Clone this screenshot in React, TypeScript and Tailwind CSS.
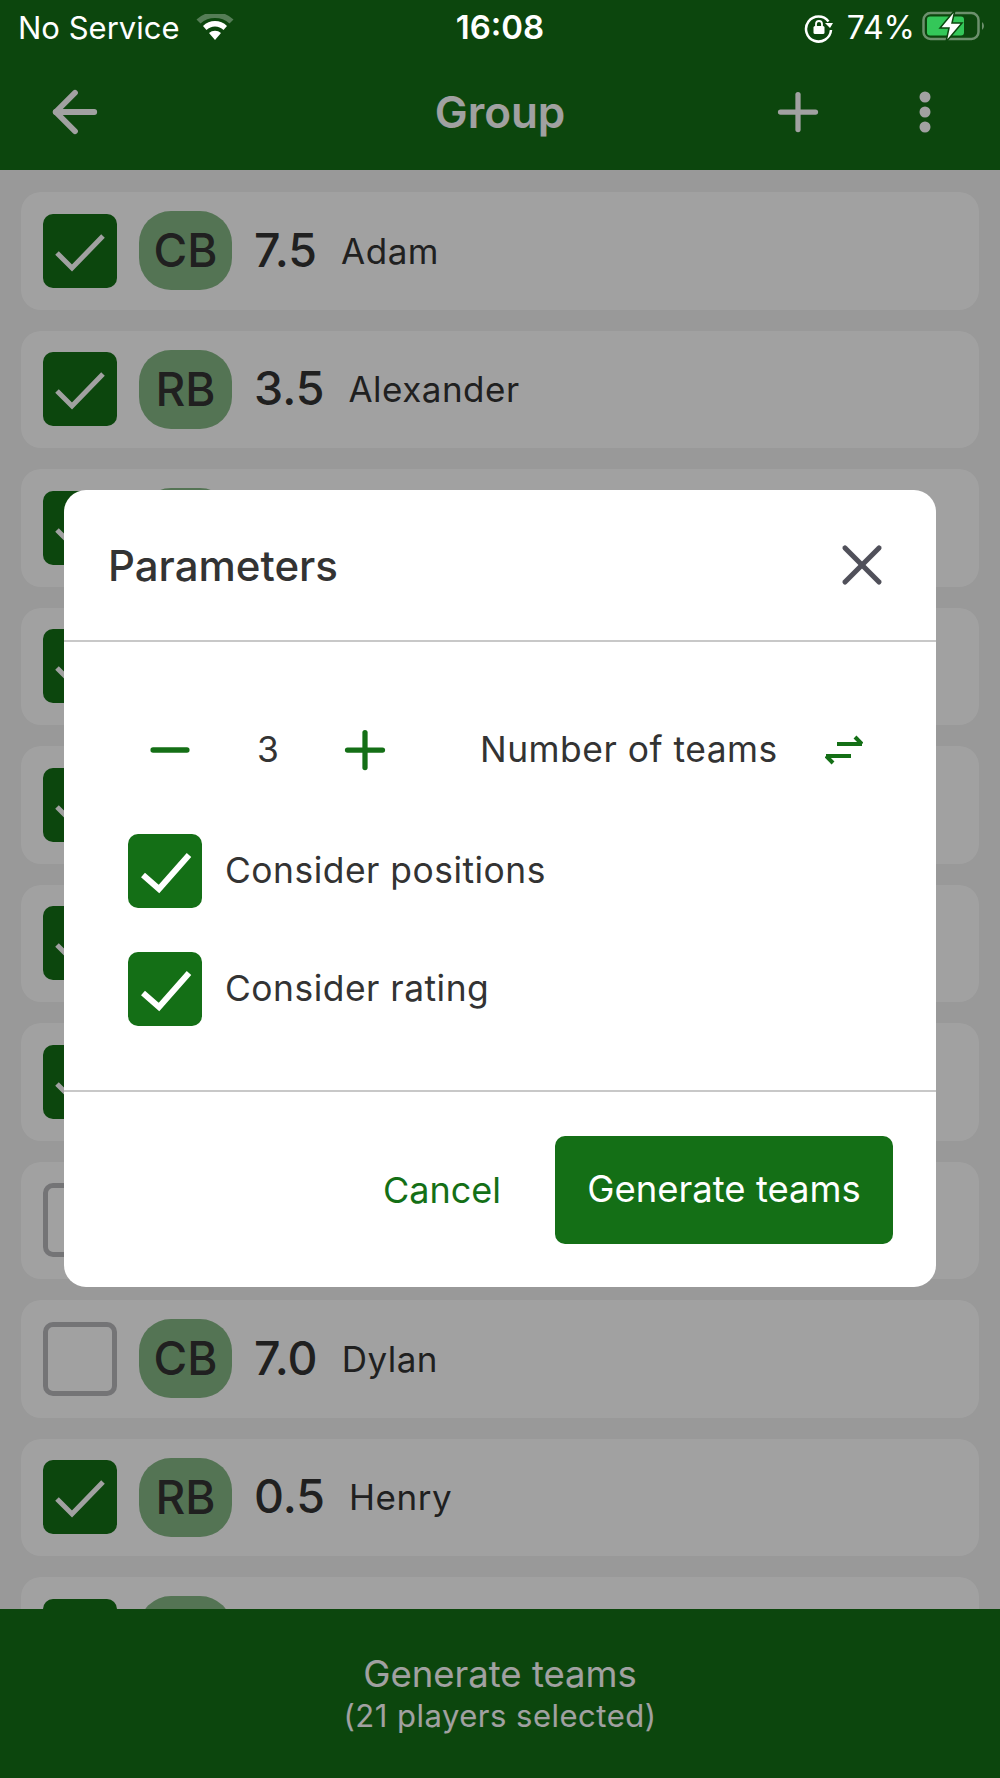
import { ArrowLeft, Minus, Plus, X } from "lucide-react";

type Player = { pos?: string; rating?: string; name?: string; checked: boolean };

// rows behind the dialog only show their checkbox and the edge of the pill
const players: Player[] = [
  { pos: "CB", rating: "7.5", name: "Adam", checked: true },
  { pos: "RB", rating: "3.5", name: "Alexander", checked: true },
  { checked: true },
  { checked: true },
  { checked: true },
  { checked: true },
  { checked: true },
  { checked: false },
  { pos: "CB", rating: "7.0", name: "Dylan", checked: false },
  { pos: "RB", rating: "0.5", name: "Henry", checked: true },
  { checked: true },
];

function Check({ thick }: { thick?: boolean }) {
  return (
    <svg viewBox="0 0 74 74" className="h-full w-full" fill="none" stroke="#fff" strokeWidth={thick ? 6 : 5}>
      {thick ? <path d="M15 41 L31 55 L61 21" /> : <path d="M14 39 L29 54 L60 22" />}
    </svg>
  );
}

function PlayerRow({ player }: { player: Player }) {
  return (
    <div className="flex h-[117.5px] shrink-0 items-center rounded-[20px] bg-white pl-[22px]">
      {player.checked ? (
        <div className="h-[74px] w-[74px] shrink-0 rounded-[10px] bg-[#146f16]">
          <Check />
        </div>
      ) : (
        <div className="h-[74px] w-[74px] shrink-0 rounded-[10px] border-[5px] border-[#b8b8bc]" />
      )}
      <div className="ml-[22px] flex h-[79px] w-[93px] shrink-0 items-center justify-center rounded-[32px] bg-[#86b886] text-[46px] font-medium text-[#333]">
        {player.pos}
      </div>
      {player.rating && <span className="ml-[22px] text-[46.5px] font-medium text-[#333]">{player.rating}</span>}
      {player.name && <span className="ml-[24px] text-[35px] tracking-[0.5px] text-[#333]">{player.name}</span>}
    </div>
  );
}

function Wifi() {
  return (
    <svg viewBox="0 0 40 28" className="h-[28px] w-[40px]">
      <path d="M20 26 L14 19 A9 9 0 0 1 26 19 Z" fill="#fff" />
      <path d="M11.5 16 L8 12 A17 17 0 0 1 32 12 L28.5 16 A12 12 0 0 0 11.5 16 Z" fill="#fff" />
      <path d="M5.5 9.5 L1.5 5.5 A27 27 0 0 1 38.5 5.5 L34.5 9.5 A22 22 0 0 0 5.5 9.5 Z" fill="#fff" fillOpacity={0.3} />
    </svg>
  );
}

function OrientationLock() {
  return (
    <svg viewBox="0 0 30 30" className="h-[30px] w-[30px]" fill="none">
      <path d="M24.5 8.5 A12.5 12.5 0 1 0 27 17" stroke="#fff" strokeWidth={2.5} />
      <path d="M21 10 L29 10 L26 15 Z" fill="#fff" />
      <rect x="9.5" y="13" width="11" height="8" rx="1.5" fill="#fff" />
      <path d="M12 13 V11 A3 3 0 0 1 18 11 V13" stroke="#fff" strokeWidth={1.8} />
    </svg>
  );
}

function Battery() {
  return (
    <svg viewBox="0 0 64 32" className="-mt-[4px] h-[32px] w-[64px]" fill="none">
      <rect x="1.5" y="3" width="55" height="26" rx="7" stroke="#fff" strokeOpacity={0.4} strokeWidth={2.5} />
      <rect x="5" y="6.5" width="37" height="19" rx="3" fill="#34c759" />
      <path d="M60 12 A5 5 0 0 1 60 20 Z" fill="#fff" fillOpacity={0.4} />
      <path d="M33 0 L18 18 H27 L24 32 L40 13 H30 Z" fill="#fff" stroke="#0c460e" strokeWidth={1.5} />
    </svg>
  );
}

function SwapArrows() {
  return (
    <svg viewBox="0 0 38 30" className="h-[30px] w-[38px]" fill="none" stroke="#146f16" strokeWidth={4}>
      <path d="M12 9 H37" />
      <path d="M30 2 L37 9" />
      <path d="M26 21 H1" />
      <path d="M8 28 L1 21" />
    </svg>
  );
}

function ModalCheck({ label }: { label: string }) {
  return (
    <div className="flex items-center">
      <div className="h-[74px] w-[74px] shrink-0 rounded-[10px] bg-[#146f16]">
        <Check thick />
      </div>
      <span className="ml-[23px] text-[35.4px] tracking-[0.5px] text-[#333]">{label}</span>
    </div>
  );
}

export default function App() {
  return (
    <div className="relative flex h-[1778px] w-[1000px] flex-col overflow-hidden bg-[#f2f2f2] font-['Inter',sans-serif]">
      {/* Header */}
      <div className="flex h-[170px] shrink-0 items-center justify-between bg-[#146f16] pl-[42px] pr-[69px] pt-[54px] text-white">
        <ArrowLeft size={66} strokeWidth={2.1} />
        <span className="absolute left-0 right-0 top-[87px] text-center text-[44px] leading-[50px] font-semibold">Group</span>
        <div className="flex items-center gap-[91px]">
          <Plus size={60} strokeWidth={2.1} />
          <svg viewBox="0 0 12 42" className="h-[42px] w-[12px]" fill="#fff">
            <circle cx="6" cy="6" r="5.5" />
            <circle cx="6" cy="21" r="5.5" />
            <circle cx="6" cy="36" r="5.5" />
          </svg>
        </div>
      </div>

      {/* Player list */}
      <div className="flex flex-1 flex-col gap-[21px] overflow-hidden px-[21px] pt-[22px]">
        {players.map((p, i) => (
          <PlayerRow key={i} player={p} />
        ))}
      </div>

      {/* Bottom bar */}
      <div className="flex h-[169px] shrink-0 flex-col items-center bg-[#146f16] pt-[43px] text-white">
        <span className="text-[36.5px] leading-[44px]">Generate teams</span>
        <span className="text-[31px] leading-[40px] tracking-[0.5px]">(21 players selected)</span>
      </div>

      {/* Dim layer */}
      <div className="absolute inset-0 bg-black/[0.37]" />

      {/* Status bar */}
      <div className="absolute left-0 right-0 top-0 flex h-[56px] items-center justify-between pl-[18px] pr-[14px] text-[31px] text-white">
        <div className="flex items-center gap-[15px]">
          <span>No Service</span>
          <Wifi />
        </div>
        <span className="absolute left-0 right-0 text-center text-[33px] font-semibold">16:08</span>
        <div className="flex items-center gap-[7px]">
          <OrientationLock />
          <span className="ml-[6px] text-[32px]">74%</span>
          <Battery />
        </div>
      </div>

      {/* Parameters dialog */}
      <div className="absolute left-[64px] top-[490px] flex h-[797px] w-[872px] flex-col rounded-[22px] bg-white">
        <div className="flex h-[152px] shrink-0 items-center justify-between border-b-2 border-[#c8c8c8] pl-[44px] pr-[40px]">
          <span className="text-[42px] font-medium text-[#333]">Parameters</span>
          <X size={68} strokeWidth={1.8} className="text-[#50505a]" />
        </div>
        <div className="flex h-[450px] shrink-0 flex-col border-b-2 border-[#c8c8c8] pl-[64px]">
          <div className="mt-[78px] flex h-[60px] items-center text-[#146f16]">
            <Minus size={58} strokeWidth={2.2} className="ml-[13px]" />
            <span className="ml-[44px] w-[50px] text-center text-[35.4px] text-[#333]">3</span>
            <Plus size={60} strokeWidth={2.1} className="ml-[42px]" />
            <span className="ml-[85px] text-[35.4px] tracking-[0.5px] text-[#333]">Number of teams</span>
            <div className="ml-[47px]">
              <SwapArrows />
            </div>
          </div>
          <div className="mt-[54px] flex flex-col gap-[44px]">
            <ModalCheck label="Consider positions" />
            <ModalCheck label="Consider rating" />
          </div>
        </div>
        <div className="flex flex-1 items-center justify-end gap-[54px] pr-[43px]">
          <span className="text-[36px] text-[#146f16]">Cancel</span>
          <div className="flex h-[108px] w-[338px] items-center justify-center rounded-[10px] bg-[#146f16] text-[36.5px] text-white">
            Generate teams
          </div>
        </div>
      </div>
    </div>
  );
}
